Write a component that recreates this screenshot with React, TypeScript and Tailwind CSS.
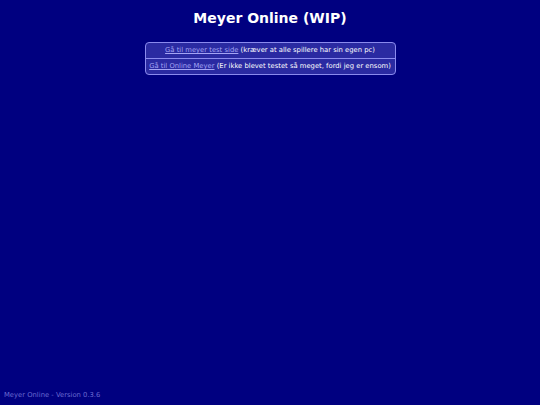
export default function App() {
  return (
    <div
      className="relative flex h-[405px] w-[540px] flex-col items-center bg-[#000080] text-white"
      style={{ fontFamily: '"DejaVu Sans", Verdana, sans-serif' }}
    >
      <h1 className="mt-[9px] text-[14px] font-bold leading-[18px]">
        Meyer Online (WIP)
      </h1>
      <div className="mt-[15px] flex w-[251px] flex-col rounded-[4px] border border-[#8a8aee] bg-[#2a2aa2] text-[6.8px]">
        <div className="border-b border-[#8a8aee] pb-[3px] pt-[3px] text-center leading-[9px]">
          <a className="text-[#a4a4f4] underline" href="#">
            Gå til meyer test side
          </a>{" "}
          (kræver at alle spillere har sin egen pc)
        </div>
        <div className="py-[3px] text-center leading-[9px]">
          <a className="text-[#a4a4f4] underline" href="#">
            Gå til Online Meyer
          </a>{" "}
          (Er ikke blevet testet så meget, fordi jeg er ensom)
        </div>
      </div>
      <div className="absolute bottom-[5px] left-[4px] text-[6.8px] text-[#6a6ad0]">
        Meyer Online - Version 0.3.6
      </div>
    </div>
  );
}
